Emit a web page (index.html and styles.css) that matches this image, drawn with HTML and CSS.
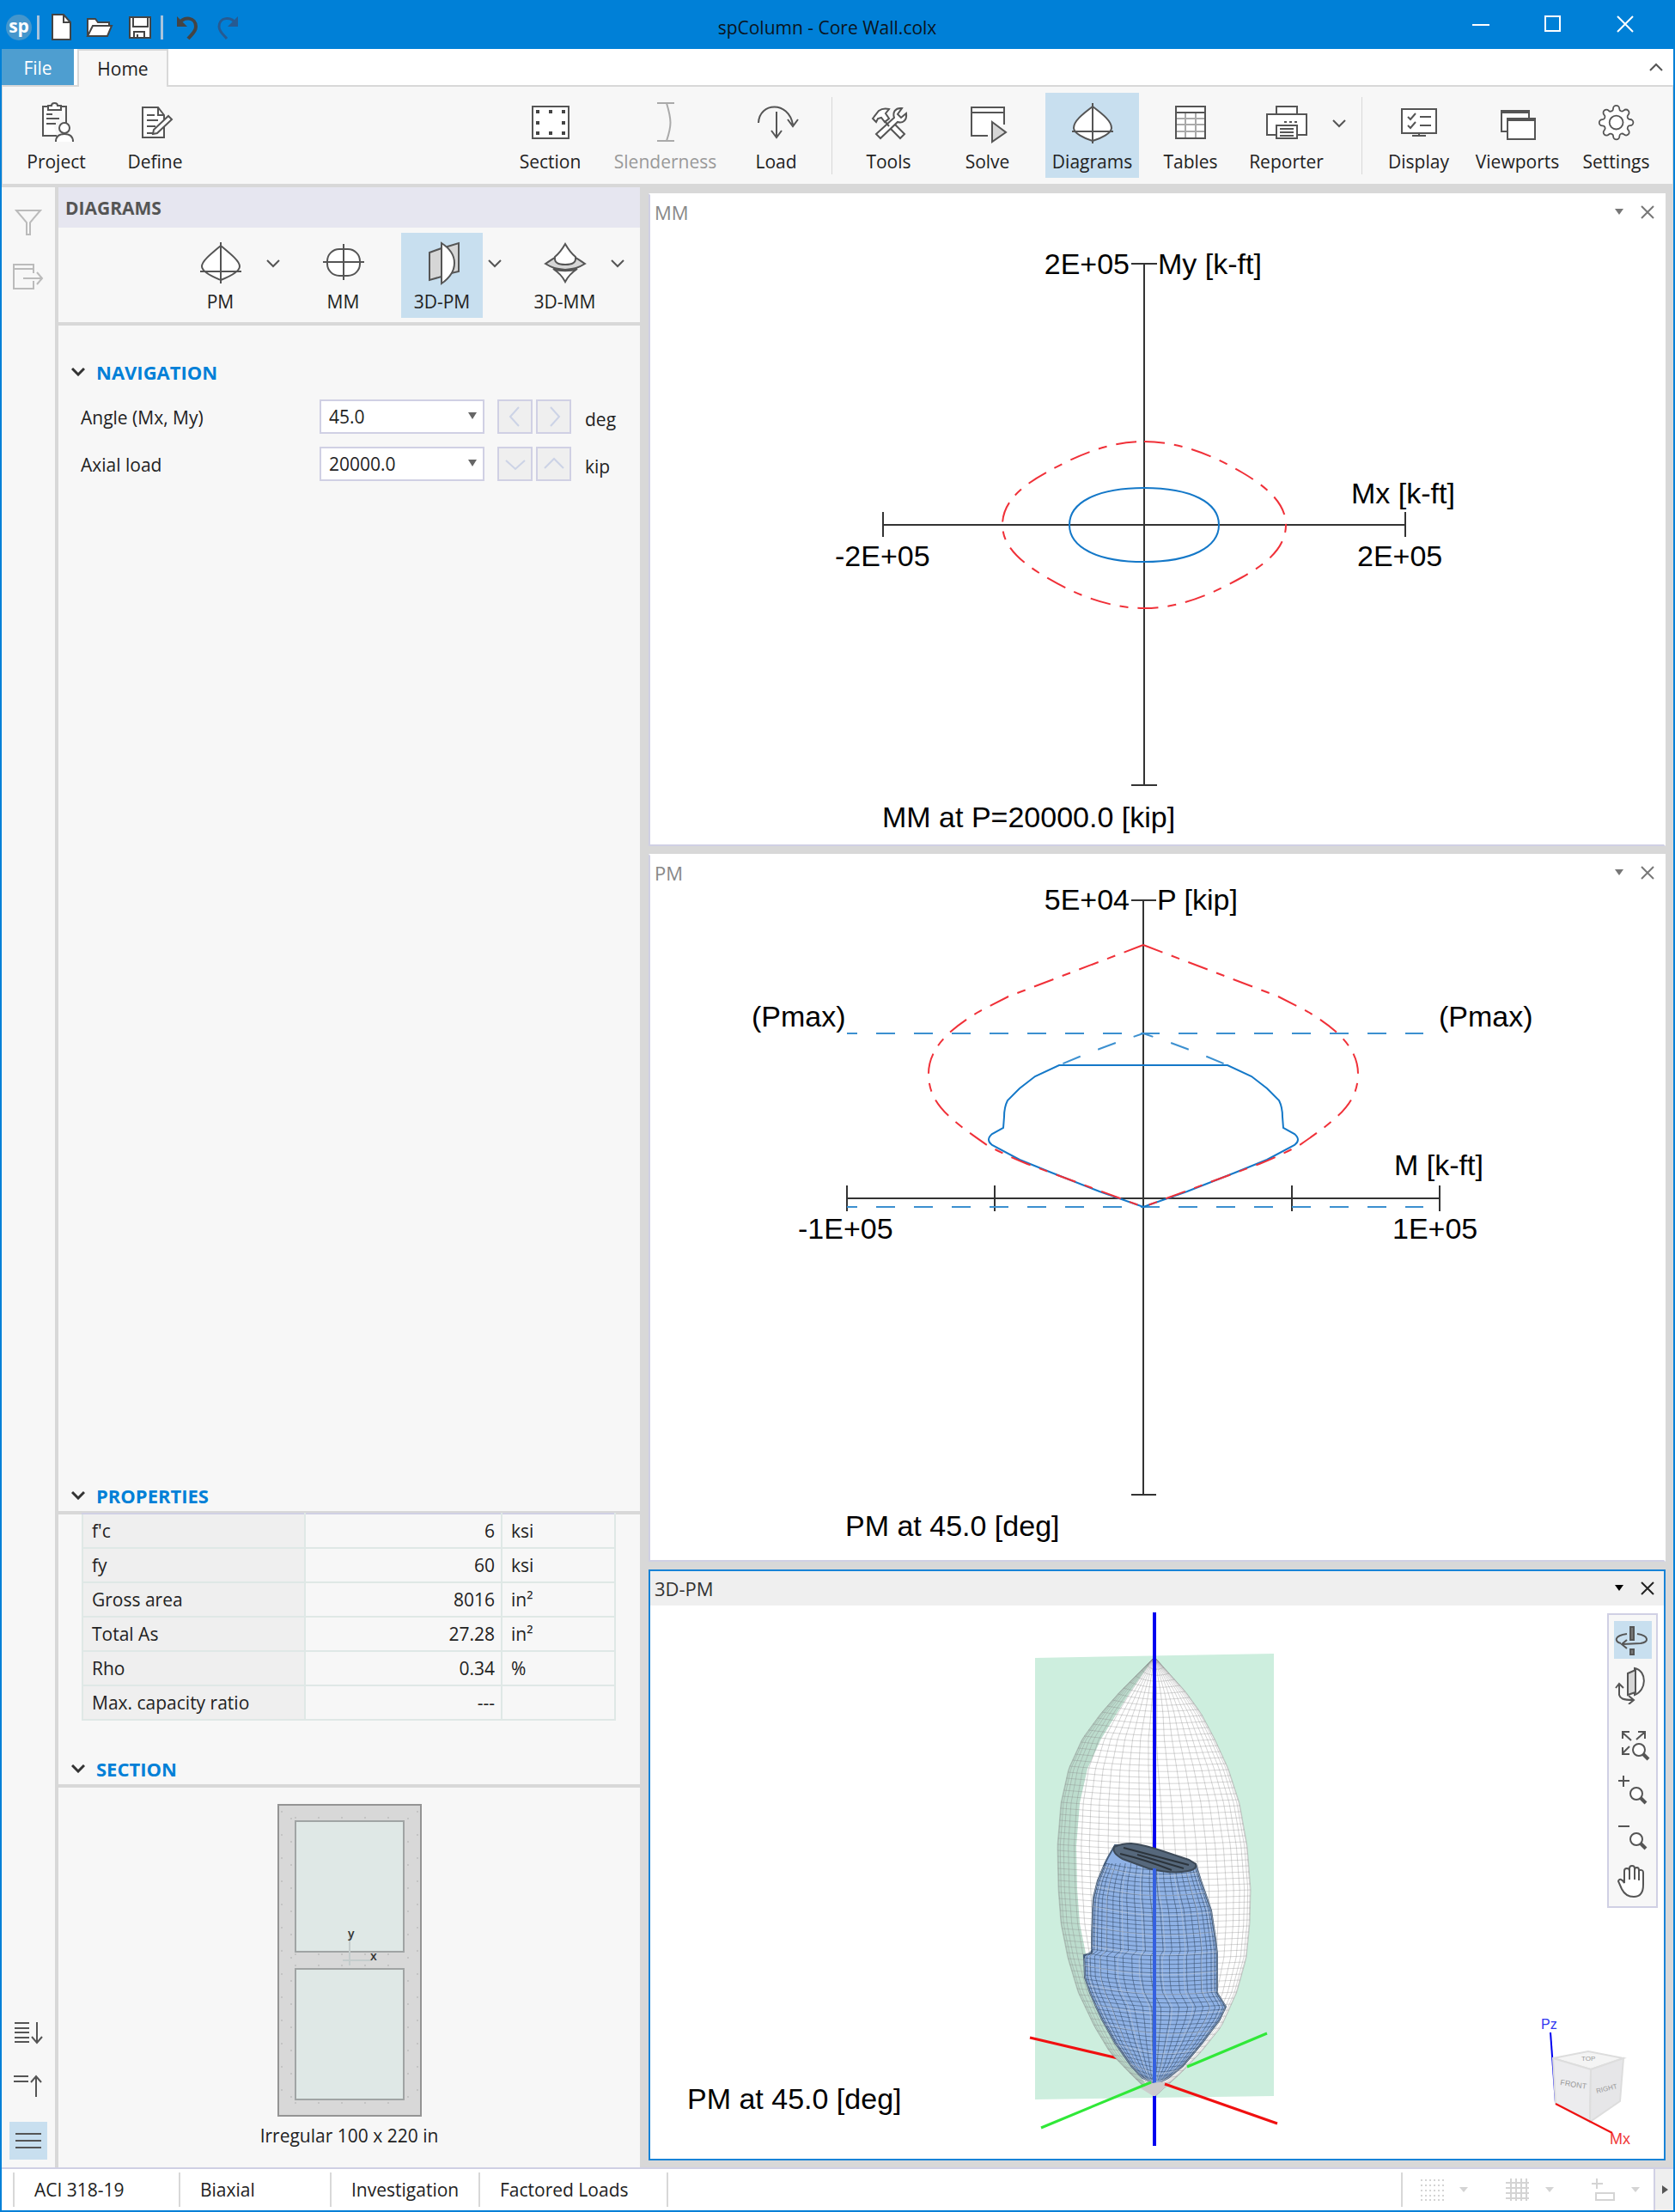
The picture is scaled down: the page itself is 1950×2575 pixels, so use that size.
FILE: index.html
```html
<!DOCTYPE html>
<html lang="en">
<head>
<meta charset="utf-8">
<title>spColumn - Core Wall.colx</title>
<link rel="stylesheet" href="styles.css">
</head>
<body>
<div class="window">
  <header class="titlebar">
    <div class="quick">
      <span class="logo">sp</span>
      <span class="quick-sep"></span>
      <button class="quick-btn" aria-label="New"><svg viewBox="0 0 32 32"><path class="paper" d="M5 1h13l8 9v20H5z"/><path class="dark" d="M18 1v9h8"/></svg></button>
      <button class="quick-btn wide" aria-label="Open"><svg viewBox="0 0 32 32"><path class="paper" d="M2 26V6h9l3 4h13v4"/><path class="paper" d="M2 26l6-12h22l-5 12z"/></svg></button>
      <button class="quick-btn" aria-label="Save"><svg viewBox="0 0 32 32"><path class="paper" d="M4 4h24v24H4z"/><path class="dark" d="M8 4v11h17V4M9 28v-7h12v7M13 28v-4"/></svg></button>
      <span class="quick-sep late"></span>
      <button class="quick-btn undo" aria-label="Undo"><svg viewBox="0 0 32 32"><path class="dark heavy" d="M6 12C12 2 26 4 26 15c0 6-5 9-9 14"/><path class="solid" d="M4 3v12h12z"/></svg></button>
      <button class="quick-btn" aria-label="Redo" disabled><svg viewBox="0 0 32 32"><path class="faded" d="M26 12C20 2 6 4 6 15c0 6 5 9 9 14"/><path class="faded-solid" d="M28 3v12H16z"/></svg></button>
    </div>
    <h1 class="title">spColumn - Core Wall.colx</h1>
    <div class="window-btns">
      <button aria-label="Minimize"><svg viewBox="0 0 20 20"><path d="M0 11h20"/></svg></button>
      <button aria-label="Maximize"><svg viewBox="0 0 20 20"><path d="M1 1h17v17H1z"/></svg></button>
      <button aria-label="Close"><svg viewBox="0 0 20 20"><path d="M1 1l18 18M19 1L1 19"/></svg></button>
    </div>
  </header>

  <nav class="tabs">
    <button class="tab file">File</button>
    <button class="tab home">Home</button>
    <button class="collapse" aria-label="Collapse ribbon"><svg viewBox="0 0 16 10"><path d="M1 9l7-7 7 7"/></svg></button>
  </nav>

  <div class="ribbon">
    <button class="tool"><svg viewBox="0 0 48 48"><path class="w" d="M14 5H8v34h16M29 5h6v20"/><path class="w" d="M14 9V4h4c0-4 7-4 7 0h4v5z"/><path d="M12 14h7M12 19h15M12 25h11"/><circle class="w" cx="33" cy="30" r="6"/><path class="w" d="M23 46c0-6 4-9 10-9s10 3 10 9"/></svg>Project</button>
    <button class="tool"><svg viewBox="0 0 48 48"><path class="w" d="M9 6h18l7 9v26H9z"/><path d="M27 6v9h7M14 15h9M14 21h13M14 28h10M14 36h8"/><path class="w" d="M39 16l4 4-17 16-5 1 1-5z"/></svg>Define</button>
    <span class="push"></span>
    <button class="tool"><svg viewBox="0 0 48 48"><path class="w" d="M3 5h42v37H3z"/><path class="dots" d="M7 9h4v4H7zM22 9h4v4h-4zM37 9h4v4h-4zM7 22h4v4H7zM37 22h4v4h-4zM7 34h4v4H7zM22 34h4v4h-4zM37 34h4v4h-4z"/></svg>Section</button>
    <button class="tool broad" disabled><svg viewBox="0 0 48 48"><path d="M14 1h20M14 45h20M25 1c6 20 6 26 0 44"/></svg>Slenderness</button>
    <button class="tool tight"><svg viewBox="0 0 48 48"><path d="M3 24C4 0 38-2 43 26M37 20l6 8 6-8M24 11v30M18 33l6 8 6-8"/></svg>Load</button>
    <span class="sep"></span>
    <button class="tool"><svg viewBox="0 0 48 48"><path class="w" d="M29 24L42 37l-5 5-13-13z"/><path class="w" d="M39 7c-8-1-11 5-9 11L9 37l5 5 20-19c6 2 11-2 10-10l-6 5-4-4z"/><path class="w" d="M5 19l7-9c4-3 8-3 12-2l-4 5 4 6-5 4-4-5-4 1-2 4z"/><path d="M19 22l5 6"/></svg>Tools</button>
    <button class="tool"><svg viewBox="0 0 48 48"><path class="w" d="M24 39H5V6h38v20"/><path d="M5 12h38"/><path class="g" d="M29 23l16 12-16 11z"/></svg>Solve</button>
    <button class="tool active"><svg viewBox="0 0 48 48"><path class="w" d="M24 5C36 14 46 22 46 30c0 6-12 12-22 15C14 42 2 36 2 30 2 22 12 14 24 5z"/><path d="M24 1v47M0 34h48"/></svg>Diagrams</button>
    <button class="tool snug"><svg viewBox="0 0 48 48"><path class="w" d="M7 5h34v37H7z"/><path class="lt" d="M8 19h32M8 26h32M8 34h32M18 12v30M30 12v30"/><path d="M7 5h34v37H7zM7 12h34"/></svg>Tables</button>
    <button class="tool"><svg viewBox="0 0 48 48"><path class="w" d="M12 15V5h24v10"/><path class="w" d="M12 38H1V14h46v24H36"/><path class="w" d="M12 27h24v15H12z"/><path d="M16 31h16M16 35h16M16 39h16M21 23h3M27 23h3M33 23h3"/></svg>Reporter</button>
    <button class="drop" aria-label="Reporter options"><svg viewBox="0 0 16 10"><path d="M1 1l7 7 7-7"/></svg></button>
    <span class="sep"></span>
    <button class="tool"><svg viewBox="0 0 48 48"><path class="w" d="M4 8h40v28H4z"/><path d="M16 39h16M24 36v3M25 17h13M25 27h13M11 17l3 3 6-7M11 27l3 3 6-7"/></svg>Display</button>
    <button class="tool"><svg viewBox="0 0 48 48"><path class="w" d="M5 10h32v24H5z"/><path class="h" d="M5 11h32"/><path class="w" d="M12 19h32v24H12z"/><path class="h" d="M12 20h32"/></svg>Viewports</button>
    <button class="tool"><svg viewBox="0 0 48 48"><g transform="translate(2 2) scale(1.8)"><path class="w thin" d="M19.4 15a1.65 1.65 0 0 0 .33 1.82l.06.06a2 2 0 0 1 0 2.83 2 2 0 0 1-2.83 0l-.06-.06a1.65 1.65 0 0 0-1.82-.33 1.65 1.65 0 0 0-1 1.51V21a2 2 0 0 1-2 2 2 2 0 0 1-2-2v-.09A1.65 1.65 0 0 0 9 19.4a1.65 1.65 0 0 0-1.82.33l-.06.06a2 2 0 0 1-2.83 0 2 2 0 0 1 0-2.83l.06-.06a1.65 1.65 0 0 0 .33-1.82 1.65 1.65 0 0 0-1.51-1H3a2 2 0 0 1-2-2 2 2 0 0 1 2-2h.09A1.65 1.65 0 0 0 4.6 9a1.65 1.65 0 0 0-.33-1.82l-.06-.06a2 2 0 0 1 0-2.83 2 2 0 0 1 2.83 0l.06.06a1.65 1.65 0 0 0 1.82.33H9a1.65 1.65 0 0 0 1-1.51V3a2 2 0 0 1 2-2 2 2 0 0 1 2 2v.09a1.65 1.65 0 0 0 1 1.51 1.65 1.65 0 0 0 1.82-.33l.06-.06a2 2 0 0 1 2.83 0 2 2 0 0 1 0 2.83l-.06.06a1.65 1.65 0 0 0-.33 1.82V9a1.65 1.65 0 0 0 1.51 1H21a2 2 0 0 1 2 2 2 2 0 0 1-2 2h-.09a1.65 1.65 0 0 0-1.51 1z"/><circle class="w thin" cx="12" cy="12" r="4.4"/></g></svg>Settings</button>
  </div>

  <main class="main">
    <aside class="rail">
      <button aria-label="Filter"><svg class="off" viewBox="0 0 36 36"><path d="M4 5h28L20 19v14h-4V19z"/></svg></button>
      <button aria-label="Export"><svg class="off" viewBox="0 0 36 36"><path d="M24 15V5H1v28h23v-9M1 10h23M12 21h22M28 14l6 7-6 7"/></svg></button>
      <span class="push"></span>
      <button aria-label="Expand all"><svg viewBox="0 0 36 36"><path d="M2 7h17M2 13h17M2 18h17M2 24h17M2 29h17M28 6v24M22 23l6 7 6-7"/></svg></button>
      <button aria-label="Collapse all"><svg viewBox="0 0 36 36"><path d="M1 6h17M1 12h17M27 30V6M21 13l6-7 6 7"/></svg></button>
      <button class="active" aria-label="Menu"><svg viewBox="0 0 36 36"><path d="M3 10h30M3 18h30M3 26h30"/></svg></button>
    </aside>

    <section class="panel">
      <h2 class="panel-title">DIAGRAMS</h2>
      <div class="panel-tools">
        <div class="pair"><button class="tool"><svg viewBox="0 0 48 48"><path class="w" d="M24 4C36 14 46 22 46 28c0 6-12 12-22 16C14 40 2 34 2 28 2 22 12 14 24 4z"/><path d="M24 0v48M0 34h48"/></svg>PM</button><button class="drop" aria-label="PM options"><svg viewBox="0 0 16 10"><path d="M1 1l7 7 7-7"/></svg></button></div>
        <button class="tool"><svg viewBox="0 0 48 48"><rect class="w" x="5" y="8" width="38" height="31" rx="14"/><path d="M24 2v42M0 23h48"/></svg>MM</button>
        <div class="pair"><button class="tool active"><svg viewBox="0 0 48 48"><path class="g" d="M30 5l13-4v33l-13 3z"/><path class="w" d="M23 1c20 13 20 33 0 47z"/><path class="g" d="M9 12l14-5v33L9 44z"/></svg>3D-PM</button><button class="drop" aria-label="3D-PM options"><svg viewBox="0 0 16 10"><path d="M1 1l7 7 7-7"/></svg></button></div>
        <div class="pair"><button class="tool"><svg viewBox="0 0 48 48"><path class="g" d="M1 25c8-5 10-7 13-8h20c3 1 5 3 13 8-8 5-12 6-23 7-11-1-15-2-23-7z"/><path class="w" d="M24 2c4 7 7 11 12 15 1 7-4 9-12 9s-13-2-12-9c5-4 8-8 12-15z"/><path class="w" d="M10 31c8 3 20 3 28 0-6 4-11 9-14 15-3-6-8-11-14-15z"/></svg>3D-MM</button><button class="drop" aria-label="3D-MM options"><svg viewBox="0 0 16 10"><path d="M1 1l7 7 7-7"/></svg></button></div>
      </div>

      <h3 class="heading nav-heading"><svg viewBox="0 0 16 10"><path d="M1 1l7 7 7-7"/></svg>NAVIGATION</h3>
      <div class="fields">
        <div class="field">
          <label for="angle">Angle (Mx, My)</label>
          <span class="combo"><select id="angle"><option>45.0</option></select><svg viewBox="0 0 10 10"><path d="M0 1h10L5 9z"/></svg></span>
          <button class="step" aria-label="Previous angle"><svg viewBox="0 0 24 24"><path d="M16 1L6 12l10 11"/></svg></button>
          <button class="step" aria-label="Next angle"><svg viewBox="0 0 24 24"><path d="M8 1l10 11L8 23"/></svg></button>
          <span class="unit">deg</span>
        </div>
        <div class="field">
          <label for="axial">Axial load</label>
          <span class="combo"><select id="axial"><option>20000.0</option></select><svg viewBox="0 0 10 10"><path d="M0 1h10L5 9z"/></svg></span>
          <button class="step" aria-label="Lower load"><svg viewBox="0 0 24 24"><path d="M1 8l11 10L23 8"/></svg></button>
          <button class="step" aria-label="Higher load"><svg viewBox="0 0 24 24"><path d="M1 17L12 6l11 11"/></svg></button>
          <span class="unit">kip</span>
        </div>
      </div>
      <span class="push"></span>

      <h3 class="heading ruled"><svg viewBox="0 0 16 10"><path d="M1 1l7 7 7-7"/></svg>PROPERTIES</h3>
      <table class="props">
        <tr><th scope="row">f'c</th><td class="num">6</td><td>ksi</td></tr>
        <tr><th scope="row">fy</th><td class="num">60</td><td>ksi</td></tr>
        <tr><th scope="row">Gross area</th><td class="num">8016</td><td>in²</td></tr>
        <tr><th scope="row">Total As</th><td class="num">27.28</td><td>in²</td></tr>
        <tr><th scope="row">Rho</th><td class="num">0.34</td><td>%</td></tr>
        <tr><th scope="row">Max. capacity ratio</th><td class="num">---</td><td></td></tr>
      </table>

      <h3 class="heading ruled"><svg viewBox="0 0 16 10"><path d="M1 1l7 7 7-7"/></svg>SECTION</h3>
      <figure class="shape">
        <svg width="168" height="364" viewBox="0 0 168 364">
          <rect class="concrete" x="1" y="1" width="166" height="362"/>
          <path class="bars" d="M5 8v350M16 16v340M152 16v340M163 8v350"/>
          <path class="bars" d="M20 16h130M20 175h130M20 188h130M20 348h130"/>
          <rect class="void" x="21" y="20" width="126" height="152"/>
          <rect class="void" x="21" y="192" width="126" height="152"/>
          <path class="axes" d="M84 150v38M76 182h34"/>
          <text x="82" y="156">y</text><text x="108" y="182">x</text>
        </svg>
        <figcaption>Irregular 100 x 220 in</figcaption>
      </figure>
    </section>

    <div class="views">
      <section class="view">
        <header class="view-head"><h2>MM</h2><button aria-label="MM menu"><svg viewBox="0 0 10 10"><path class="tri" d="M0 1h10L5 8z"/></svg></button><button aria-label="Close MM"><svg class="x" viewBox="0 0 16 16"><path d="M1 1l14 14M15 1L1 15"/></svg></button></header>
        <svg class="plot" viewBox="-575 -344 1180 716">
          <path class="axis" d="M0-304V303M-15-304H15M-15 303H15M-304 0H304M-304-15V14M304-15V14"/>
          <path class="nominal" d="M0-97C45-97 85-78 114-61S165-25 165 0 145 44 114 61 45 97 0 97-85 78-114 61-165 25-165 0-145-44-114-61-45-97 0-97z"/>
          <path class="factored" d="M0-43C55-43 87-26 87 0S55 43 0 43-87 26-87 0-55-43 0-43z"/>
          <text class="end" x="-17" y="-292">2E+05</text><text x="16" y="-292">My [k-ft]</text>
          <text x="241" y="-25">Mx [k-ft]</text><text x="-360" y="48">-2E+05</text><text x="248" y="48">2E+05</text>
          <text x="-305" y="352">MM at P=20000.0 [kip]</text>
        </svg>
      </section>

      <section class="view">
        <header class="view-head"><h2>PM</h2><button aria-label="PM menu"><svg viewBox="0 0 10 10"><path class="tri" d="M0 1h10L5 8z"/></svg></button><button aria-label="Close PM"><svg class="x" viewBox="0 0 16 16"><path d="M1 1l14 14M15 1L1 15"/></svg></button></header>
        <svg class="plot" viewBox="-574 -359 1180 780">
          <path class="axis" d="M0-347V345M-14-347H15M-14 345H15M-345 0H345M-345-15V15M345-15V15M-173-15V15M173-15V15"/>
          <path class="limit" d="M-345-192H326M-345 10H326"/>
          <path class="limit" d="M0-192L32-181 51-174 74-165 98-155M0-192L-32-181-51-174-74-165-98-155"/>
          <path class="factored" d="M-98-155H98L126-142 144-128 158-114Q162-106 162-95L163-82 176-75Q184-68 176-62L144-45 107-30 51-8 0 10-51-8-107-30-144-45-176-62Q-184-68-176-75L-163-82-162-95Q-162-106-158-114L-144-128-126-142z"/>
          <path class="nominal" d="M0-295L157-235 192-217C215-203 250-180 250-145S225-92 182-62Q160-50 135-40L0 10"/>
          <path class="nominal" d="M0-295L-157-235-192-217C-215-203-250-180-250-145S-225-92-182-62Q-160-50-135-40L0 10"/>
          <text class="end" x="-16" y="-336">5E+04</text><text x="16" y="-336">P [kip]</text>
          <text x="-456" y="-200">(Pmax)</text><text x="344" y="-200">(Pmax)</text>
          <text x="292" y="-27">M [k-ft]</text><text x="-402" y="47">-1E+05</text><text x="290" y="47">1E+05</text>
          <text x="-347" y="393">PM at 45.0 [deg]</text>
        </svg>
      </section>

      <section class="view current">
        <header class="view-head"><h2>3D-PM</h2><button aria-label="3D-PM menu"><svg viewBox="0 0 10 10"><path class="tri" d="M0 1h10L5 8z"/></svg></button><button aria-label="Close 3D-PM"><svg class="x" viewBox="0 0 16 16"><path d="M1 1l14 14M15 1L1 15"/></svg></button></header>
        <div class="scene">
          <svg class="plot" viewBox="-587 0 1180 644">
            <path class="plane" d="M-139 61L139 56V571L-139 575z"/>
            <path class="red" d="M-145 503L0 537"/>
            <g id="nominal-mesh"></g>
            <path class="blue" d="M0 8V629"/>
            <g id="factored-mesh"></g>
            <path class="blue inside" d="M0 306V556"/>
            <path class="tip" d="M-16 562Q0 552 18 556L0 572z"/>
            <path class="blue" d="M0 571V629"/>
            <path class="red" d="M12 557L143 603"/>
            <path class="green" d="M-132 608L-4 555M38 537L131 498"/>
            <text x="-544" y="586">PM at 45.0 [deg]</text>
            <g class="cube">
              <path class="blue slim" d="M461 497L467 579"/>
              <path class="top" d="M464 527L505 519 546 527 508 540z"/>
              <path class="front" d="M464 527L508 540 507 601 467 580z"/>
              <path class="side" d="M546 527L508 540 507 601 542 577z"/>
              <path class="red slim" d="M467 580L533 614"/>
              <text class="face" transform="translate(472 558) rotate(9)">FRONT</text>
              <text class="face small" transform="translate(515 568) rotate(-14)">RIGHT</text>
              <text class="face small" x="497" y="530">TOP</text>
              <text class="pz" x="450" y="493">Pz</text><text class="mx" x="530" y="627">Mx</text>
            </g>
          </svg>
          <div class="view-tools">
            <button class="active" aria-label="Rotate about axis"><svg viewBox="0 0 44 44"><path class="rod" d="M19 7h4v15h-4zM19 33h4v6h-4z"/><path d="M15 15C0 17 0 24 8 26M27 15c14 2 14 10 4 11l-21 1M15 22l-6 5 6 5"/></svg></button>
            <button aria-label="Rotate model"><svg viewBox="0 0 44 44"><path class="w" d="M24 2c15 3 14 26 0 31z"/><path class="g" d="M16 8l9-4v26l-9 3z"/><path d="M6 20v13c1 4 4 6 16 6M2 25l4-5 5 5M17 34l6 5-6 5"/></svg></button>
            <button class="gap" aria-label="Zoom extents"><svg viewBox="0 0 44 44"><path d="M20 17L10 8M10 15V7h8M26 16l9-8M28 7h8v8M18 24l-8 8M10 25v8h8"/><circle class="w" cx="29" cy="28" r="7"/><path class="h" d="M34 33l6 6"/></svg></button>
            <button aria-label="Zoom in"><svg viewBox="0 0 44 44"><path d="M5 11h13M11 5v13"/><circle class="w" cx="26" cy="26" r="7"/><path class="h" d="M31 31l6 6"/></svg></button>
            <button aria-label="Zoom out"><svg viewBox="0 0 44 44"><path d="M5 11h13"/><circle class="w" cx="26" cy="26" r="7"/><path class="h" d="M31 31l6 6"/></svg></button>
            <button aria-label="Pan"><svg viewBox="0 0 44 44"><path class="w" d="M12 24V10c0-4 6-4 6 0V7c0-4 6-4 6 0v2c0-4 5-4 5 0v2c0-3 5-3 5 1v14c0 8-3 14-11 14-7 0-11-3-14-9l-4-9c1-4 5-2 7 2z"/><path d="M18 9v11M24 8v12M29 10v11"/></svg></button>
          </div>
        </div>
      </section>
    </div>
  </main>

  <footer class="status">
    <span class="cell code">ACI 318-19</span>
    <span class="cell mode">Biaxial</span>
    <span class="cell run">Investigation</span>
    <span class="cell loads">Factored Loads</span>
    <span class="push"></span>
    <div class="status-tools">
      <svg viewBox="0 0 28 26"><path class="dotgrid" d="M1 2h28M1 8h28M1 14h28M1 20h28M1 25h28"/></svg>
      <svg class="caret" viewBox="0 0 10 10"><path class="tri" d="M0 2h10L5 8z"/></svg>
      <svg viewBox="0 0 28 26"><path d="M0 5h27M0 11h27M0 17h27M0 23h27M6 0v26M12 0v26M18 0v26M24 0v26"/></svg>
      <svg class="caret" viewBox="0 0 10 10"><path class="tri" d="M0 2h10L5 8z"/></svg>
      <svg viewBox="0 0 28 26"><path d="M0 6h13M6 0v12M5 17h21v8H5z"/></svg>
      <svg class="caret" viewBox="0 0 10 10"><path class="tri" d="M0 2h10L5 8z"/></svg>
    </div>
    <button class="more" aria-label="More"><svg viewBox="0 0 10 10"><path d="M2 0l7 5-7 5z"/></svg></button>
  </footer>
</div>
<script src="scene.js"></script>
</body>
</html>
```
FILE: scene.js
```js
// Builds the wireframe interaction surfaces of the 3D-PM viewport.
// Profiles are lists of [height, left edge, right edge].
const nominal = [
  [61, -1, 1], [80, -20, 18], [100, -40, 36], [125, -62, 54], [155, -84, 70],
  [190, -100, 86], [230, -109, 99], [280, -113, 108], [330, -112, 112],
  [370, -109, 111], [410, -101, 107], [450, -89, 96], [490, -70, 78],
  [520, -52, 54], [545, -28, 30], [571, -1, 1]
];
const factored = [
  [279, -46, -22], [286, -50, 0], [293, -54, 28], [301, -58, 48], [320, -66, 54],
  [340, -71, 61], [355, -72, 66], [388, -73, 71], [405, -73, 73], [407, -82, 73],
  [433, -81, 73], [451, -75, 73], [467, -68, 83], [482, -61, 76], [509, -46, 56],
  [536, -27, 33], [550, -14, 16], [556, 0, 4]
];
const NS = 'http://www.w3.org/2000/svg';

function edges(profile, y) {
  let i = 1;
  while (i < profile.length - 1 && profile[i][0] < y) i++;
  const a = profile[i - 1], b = profile[i];
  const t = Math.min(1, Math.max(0, (y - a[0]) / (b[0] - a[0])));
  return [a[1] + (b[1] - a[1]) * t, a[2] + (b[2] - a[2]) * t];
}

function add(parent, cls, d) {
  const p = document.createElementNS(NS, 'path');
  p.setAttribute('class', cls);
  p.setAttribute('d', d);
  parent.appendChild(p);
}

function outline(profile) {
  const left = profile.map(p => p[1] + ' ' + p[0]);
  const right = profile.map(p => p[2] + ' ' + p[0]).reverse();
  return 'M' + left.concat(right).join('L') + 'z';
}

function mesh(profile, from, meridians, step, tilt) {
  const bottom = profile[profile.length - 1][0];
  let d = '';
  for (let k = 0; k <= meridians; k++) {
    const f = 0.5 - 0.5 * Math.cos(Math.PI * k / meridians);
    for (let y = from; y <= bottom; y += 6) {
      const [l, r] = edges(profile, y);
      const x = l + (r - l) * f;
      d += (y === from ? 'M' : 'L') + x.toFixed(1) + ' ' + y;
    }
  }
  for (let y = from; y < bottom; y += step) {
    for (let j = 0; j <= 16; j++) {
      const f = j / 16;
      const yy = Math.min(bottom, y + tilt * Math.sin(Math.PI * f) + tilt * f);
      const [l, r] = edges(profile, yy);
      d += (j ? 'L' : 'M') + (l + (r - l) * f).toFixed(1) + ' ' + yy.toFixed(1);
    }
  }
  return d;
}

const outer = document.getElementById('nominal-mesh');
const front = nominal.map(([y, l, r]) => [y, l + Math.min(22, (r - l) * 0.16), r]);
add(outer, 'behind', outline(nominal));
add(outer, 'skin', outline(front));
add(outer, 'wire', mesh(nominal, 61, 26, 7, 4));

const inner = document.getElementById('factored-mesh');
add(inner, 'body', outline(factored));
add(inner, 'grid', mesh(factored, 300, 22, 5, 5));
add(inner, 'glint', mesh(factored, 304, 9, 23, 7));
add(inner, 'mouth', 'M-47 281Q-38 277-27 277Q-10 279 10 286L40 296 48 301Q50 307 39 309Q20 313-7 306L-37 295Q-50 288-47 281z');
add(inner, 'mouth-line', 'M-36 282L40 302M-20 290L34 306M-40 289Q-10 296 20 308');
```
FILE: styles.css
```css
* { box-sizing: border-box; }

body {
  margin: 0;
  font-family: "Open Sans", "Noto Sans", sans-serif;
  font-size: 21px;
  line-height: 28px;
  color: #222;
}

button {
  margin: 0;
  padding: 0;
  border: 0;
  background: none;
  font: inherit;
  color: inherit;
}

h1, h2, h3, figure { margin: 0; font-weight: 400; font-size: 21px; }

svg { display: block; fill: none; stroke: #555; stroke-width: 2; }

.push { flex: 1; }

.window {
  display: flex;
  flex-direction: column;
  min-height: 100vh;
  border: 2px solid #0080d7;
  border-top: 0;
  background: #d8d8d8;
}

/* title bar */
.titlebar {
  display: grid;
  grid-template-columns: 1fr auto 1fr;
  align-items: center;
  height: 57px;
  padding: 6px 24px 0 0;
  background: #0080d7;
}
.quick { display: flex; align-items: center; padding-left: 5px; }
.logo {
  width: 30px;
  height: 30px;
  border-radius: 50%;
  background: #4596cc;
  color: #fff;
  font-weight: 700;
  line-height: 26px;
  text-align: center;
}
.quick-sep { width: 3px; height: 28px; margin: 0 10px 0 6px; background: #a9c4dc; }
.quick-sep.late { margin: 0 12px 0 8px; }
.quick-btn { width: 32px; margin-right: 12px; }
.quick-btn.wide { margin-right: 15px; }
.quick-btn:nth-of-type(3) { margin-right: 0; }
.quick-btn.undo { margin-right: 15px; }
.quick-btn svg { width: 32px; height: 32px; }
.paper { fill: #fff; stroke: #444; }
.dark { stroke: #444; }
.heavy { stroke-width: 4; }
.solid { fill: #444; stroke: none; }
.faded { stroke: #265a92; stroke-width: 3; }
.faded-solid { fill: #265a92; stroke: none; }
.title { color: #0b1420; }
.window-btns { display: flex; justify-content: flex-end; gap: 2px; margin-right: -9px; }
.window-btns button { width: 82px; height: 42px; display: grid; place-items: center; }
.window-btns svg { width: 20px; height: 20px; stroke: #fff; margin-bottom: 8px; }

/* tabs */
.tabs { display: flex; height: 44px; background: #fff; border-bottom: 2px solid #d8d8d8; }
.tab { height: 42px; padding-top: 2px; }
.file { width: 84px; margin-right: 4px; background: #4e9ed0; color: #fff; }
.home {
  width: 106px;
  height: 44px;
  padding-bottom: 2px;
  border: 2px solid #d8d8d8;
  border-bottom: 0;
  background: #f7f7f7;
}
.collapse { width: 40px; margin-left: auto; display: grid; place-items: center; }
.collapse svg, .drop svg { width: 16px; height: 10px; }

/* ribbon */
.ribbon {
  display: flex;
  align-items: center;
  height: 113px;
  margin: 0 1px;
  padding: 0 8px 0 5px;
  background: #f7f7f7;
}
.tool {
  display: flex;
  flex-direction: column;
  align-items: center;
  gap: 7px;
  width: 115px;
  height: 99px;
  padding-top: 11px;
}
.tool svg { width: 48px; height: 48px; overflow: visible; }
.tool.active { width: 109px; margin: 0 6px 0 10px; }
.tool.snug { width: 108px; }
.tool.broad { width: 153px; }
.tool.tight { width: 105px; }
.tool:disabled { color: #999; }
.tool:disabled svg { stroke: #aaa; }
.active { background: #c8dfef; }
.drop { width: 28px; height: 99px; padding-bottom: 28px; display: grid; place-items: center; }
.ribbon .drop { margin-left: -10px; }
.sep { width: 1px; height: 90px; margin: 0 8px 0 12px; background: #d8d8d8; }
.w { fill: #fff; }
.g { fill: #d6d6d6; }
.h { stroke-width: 4; }
.lt { stroke: #aaa; }
.thin { stroke-width: 1; }
.dots { fill: #444; stroke: none; }

/* body */
.main { flex: 1; display: flex; padding-top: 4px; }
.rail {
  display: flex;
  flex-direction: column;
  align-items: center;
  gap: 19px;
  width: 62px;
  padding: 18px 0 9px;
  background: #f7f7f7;
}
.rail button { width: 44px; height: 44px; display: grid; place-items: center; }
.rail svg { width: 36px; height: 36px; }
.off { stroke: #bbb; }

.panel {
  display: flex;
  flex-direction: column;
  width: 677px;
  margin-left: 4px;
  background: #f7f7f7;
}
.panel-title {
  height: 47px;
  padding-left: 8px;
  background: #e6e6f0;
  color: #555;
  font-weight: 700;
  line-height: 48px;
}
.panel-tools {
  display: flex;
  justify-content: flex-end;
  gap: 20px;
  height: 114px;
  padding: 6px 12px 0 0;
  border-bottom: 4px solid #d8d8d8;
}
.pair { display: flex; }
.panel-tools .tool { width: 95px; margin: 0; }
.heading {
  display: flex;
  align-items: center;
  gap: 13px;
  height: 36px;
  padding-left: 15px;
  color: #0080d7;
  font-size: 22px;
  font-weight: 700;
}
.heading svg { width: 16px; height: 10px; stroke: #333; stroke-width: 3; }
.nav-heading { margin-top: 36px; }
.ruled { height: 40px; border-bottom: 4px solid #d8d8d8; }

.fields { display: flex; flex-direction: column; gap: 15px; padding: 14px 0 0 26px; }
.field { display: flex; align-items: center; height: 40px; }
.field label { width: 278px; padding-top: 2px; }
.combo { position: relative; width: 192px; margin-right: 15px; }
.combo select {
  width: 100%;
  height: 40px;
  padding: 0 9px;
  border: 2px solid #d0d0e4;
  border-radius: 0;
  background: #fff;
  font: inherit;
  color: inherit;
  appearance: none;
}
.combo svg { position: absolute; right: 9px; top: 14px; width: 10px; height: 10px; fill: #666; stroke: none; }
.step {
  width: 41px;
  height: 40px;
  margin-right: 4px;
  border: 2px solid #d0d0e4;
  background: #efefef;
  display: grid;
  place-items: center;
}
.step svg { width: 24px; height: 24px; stroke: #ccd3e6; }
.unit { margin-left: 12px; padding-top: 6px; }

.props { width: 622px; margin: -2px 0 38px 27px; border-collapse: collapse; table-layout: fixed; }
.props th, .props td {
  height: 40px;
  padding: 0 10px;
  border: 2px solid #dfe8e6;
  font-weight: 400;
  text-align: left;
}
.props tr:first-child > * { border-top-color: #d0d0e4; }
.props th { width: 259px; background: #efefef; }
.props td.num { width: 229px; padding-right: 7px; text-align: right; }

.shape { display: flex; flex-direction: column; align-items: center; padding: 19px 0 23px; gap: 8px; }
.concrete { fill: #d8d8d8; stroke: #949494; }
.void { fill: #dfe8e6; stroke: #a0a4a4; }
.bars { stroke: #c4c4c4; stroke-dasharray: 2 25; }
.axes { stroke: #c4cccc; }
.shape text { fill: #333; stroke: none; font-size: 14px; font-weight: 600; }

/* viewports */
.views {
  flex: 1;
  min-width: 0;
  display: flex;
  flex-direction: column;
  gap: 9px;
  padding: 7px 9px 8px 10px;
}
.view { border: 2px solid; border-color: #fff #fff #d0d0e4 #d0d0e4; background: #fff; }
.view-head { display: flex; align-items: center; gap: 20px; height: 40px; padding: 0 11px 0 5px; color: #888; }
.view-head h2 { flex: 1; font-size: 22px; }
.view-head svg { width: 10px; height: 10px; stroke: #777; }
.view-head .x { width: 16px; height: 16px; }
.tri { fill: #777; stroke: none; }
.current { border-color: #1883d7; }
.current .view-head { background: #efefef; color: #333; }
.current .x { stroke: #222; }
.current .tri { fill: #000; }

.plot { width: 100%; height: auto; overflow: visible; }
.plot text { fill: #000; stroke: none; font-family: "Liberation Sans", Arial, sans-serif; font-size: 34px; }
.plot .end { text-anchor: end; }
.axis { stroke: #333; }
.nominal { stroke: #f03038; stroke-dasharray: 24 11 10 11; }
.factored { stroke: #1478c8; }
.limit { stroke: #3c90d0; stroke-dasharray: 22 22; stroke-dashoffset: 10; }

.scene { position: relative; }
.plane { fill: #cdeede; stroke: none; }
.behind { fill: #bcdccd; stroke: none; }
.skin { fill: #fff; stroke: none; }
.wire { stroke: #888; stroke-width: 1; opacity: 0.35; }
.body { fill: #8fb2e6; stroke: #47607e; }
.grid { stroke: #3a5170; stroke-width: 1; opacity: 0.6; }
.glint { stroke: #c0c8d4; stroke-width: 1; opacity: 0.5; }
.mouth { fill: #56687c; stroke: #3d4a58; }
.mouth-line { stroke: #2c343c; }
.tip { fill: #ccc; stroke: none; }
.blue { stroke: #0000f0; stroke-width: 4; }
.inside { stroke: #3460e0; }
.red { stroke: #f01010; stroke-width: 3; }
.green { stroke: #30e838; stroke-width: 3; }
.slim { stroke-width: 2; }
.top { fill: #f4f4f4; stroke: #ddd; }
.front { fill: #ececee; stroke: #ddd; }
.side { fill: #e6e6e8; stroke: #ddd; }
.plot .face { font-size: 9px; fill: #999; }
.plot .small { font-size: 8px; }
.plot .pz { font-size: 16px; fill: #3038f0; }
.plot .mx { font-size: 18px; fill: #f03838; }

.view-tools {
  position: absolute;
  top: 9px;
  right: 7px;
  display: flex;
  flex-direction: column;
  align-items: center;
  gap: 9px;
  width: 59px;
  padding: 7px 0;
  border: 2px solid #d0d0e4;
  background: #f7f7f7;
}
.view-tools button { width: 44px; height: 44px; }
.view-tools .gap { margin-top: 16px; }
.rod { fill: #777; }

/* status bar */
.status {
  display: flex;
  align-items: center;
  height: 50px;
  padding-left: 13px;
  border-top: 2px solid #d0d0e4;
  background: #fff;
}
.cell { height: 40px; padding: 6px 0 0 23px; border-left: 2px solid #d8d8d8; }
.code { width: 193px; }
.mode { width: 176px; }
.run { width: 173px; }
.loads { width: 221px; border-right: 2px solid #d8d8d8; }
.status-tools {
  display: flex;
  align-items: center;
  height: 40px;
  padding: 0 12px 0 20px;
  border-left: 2px solid #d8d8d8;
}
.status-tools svg { width: 28px; height: 26px; margin-right: 18px; stroke: #d4d4d4; }
.status-tools .caret { width: 10px; height: 10px; margin-right: 44px; }
.status-tools .caret:last-child { margin-right: 4px; }
.status-tools .tri { fill: #d4d4d4; }
.dotgrid { stroke-dasharray: 2 3; }
.more { width: 23px; align-self: stretch; border-left: 2px solid #d0d0e4; background: #efefef; display: grid; place-items: center; }
.more svg { width: 10px; height: 10px; fill: #555; stroke: none; }
```
